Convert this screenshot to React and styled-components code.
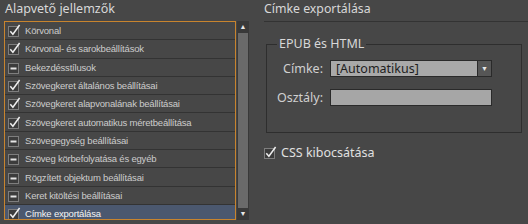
import React from 'react'
import styled, { createGlobalStyle } from 'styled-components'

const GlobalStyle = createGlobalStyle`
  html, body {
    margin: 0;
    padding: 0;
    background: #474747;
  }
  body {
    font-family: "Noto Sans", "Liberation Sans", sans-serif;
    color: #d6d6d6;
  }
`

const items = [
  { label: 'Körvonal', state: 'on' },
  { label: 'Körvonal- és sarokbeállítások', state: 'on' },
  { label: 'Bekezdésstílusok', state: 'mixed' },
  { label: 'Szövegkeret általános beállításai', state: 'on' },
  { label: 'Szövegkeret alapvonalának beállításai', state: 'on' },
  { label: 'Szövegkeret automatikus méretbeállítása', state: 'on' },
  { label: 'Szövegegység beállításai', state: 'mixed' },
  { label: 'Szöveg körbefolyatása és egyéb', state: 'mixed' },
  { label: 'Rögzített objektum beállításai', state: 'mixed' },
  { label: 'Keret kitöltési beállításai', state: 'mixed' },
  { label: 'Címke exportálása', state: 'on', selected: true },
]

const CheckIcon = ({ state }) => (
  <svg width="13" height="13" viewBox="0 0 13 13">
    <rect x="0.5" y="2.5" width="10" height="10" fill="#3c3c3c" stroke="#7e7e7e" />
    {state === 'on' ? (
      <path d="M2.3 7.2 L4.9 10.2 L11.6 1" fill="none" stroke="#eeeeee" strokeWidth="1.5" />
    ) : (
      <rect x="2.5" y="6.5" width="6" height="2" fill="#e4e4e4" />
    )}
  </svg>
)

const App = () => {
  return (
    <>
      <GlobalStyle />
      <Page>
        <LeftPanel>
          <Title>Alapvető jellemzők</Title>
          <ListFrame>
            <List>
              {items.map((it) => (
                <Row key={it.label} selected={it.selected}>
                  <CheckIcon state={it.state} />
                  <RowText>{it.label}</RowText>
                </Row>
              ))}
            </List>
            <Scrollbar>
              <Arrow>▲</Arrow>
              <Thumb />
              <Arrow>▼</Arrow>
            </Scrollbar>
          </ListFrame>
        </LeftPanel>
        <RightPanel>
          <Heading>Címke exportálása</Heading>
          <Group>
            <Legend>EPUB és HTML</Legend>
            <FormGrid>
              <Label>Címke:</Label>
              <Select>
                <SelectValue>[Automatikus]</SelectValue>
                <DropButton>▼</DropButton>
              </Select>
              <Label>Osztály:</Label>
              <TextInput />
            </FormGrid>
          </Group>
          <CheckRow>
            <CheckIcon state="on" />
            <CheckLabel>CSS kibocsátása</CheckLabel>
          </CheckRow>
        </RightPanel>
      </Page>
    </>
  )
}

export default App

const Page = styled.div`
  width: 528px;
  height: 224px;
  display: flex;
  overflow: hidden;
`

const LeftPanel = styled.div`
  width: 264px;
  padding-left: 4px;
  box-sizing: border-box;
  display: flex;
  flex-direction: column;
`

const Title = styled.div`
  height: 21px;
  padding-left: 1px;
  font-size: 12.5px;
  line-height: 18px;
  color: #d8d8d8;
`

const ListFrame = styled.div`
  display: flex;
  gap: 1px;
  height: 199px;
`

const List = styled.div`
  width: 232px;
  box-sizing: border-box;
  border: 1px solid #c8842e;
  overflow: hidden;
  background: #4a4a4a;
`

const Row = styled.div`
  height: 18.3px;
  box-sizing: border-box;
  display: flex;
  align-items: center;
  gap: 4px;
  padding-left: 3px;
  border-bottom: 1px solid #333333;
  background: ${({ selected }) => (selected ? '#4b586f' : '#474747')};
  color: ${({ selected }) => (selected ? '#f4f4f4' : '#cccccc')};
`

const RowText = styled.span`
  font-family: "Liberation Sans", Arial, sans-serif;
  font-size: 9.5px;
  letter-spacing: -0.2px;
  white-space: nowrap;
`

const Scrollbar = styled.div`
  width: 12px;
  background: #393939;
  display: flex;
  flex-direction: column;
  align-items: stretch;
`

const Arrow = styled.div`
  height: 12px;
  font-size: 7px;
  line-height: 12px;
  text-align: center;
  color: #e8e8e8;
`

const Thumb = styled.div`
  flex: 1;
  margin: 0 1px;
  background: #6a6a6a;
`

const RightPanel = styled.div`
  flex: 1;
  display: flex;
  flex-direction: column;
`

const Heading = styled.div`
  height: 21px;
  font-size: 12.3px;
  line-height: 18px;
  color: #d8d8d8;
  border-bottom: 1px solid #333333;
`

const Group = styled.div`
  position: relative;
  margin: 22px 6px 0 2px;
  height: 89px;
  border: 1px solid #2e2e2e;
  padding: 15px 0 0 0;
  box-sizing: border-box;
`

const Legend = styled.span`
  position: absolute;
  top: -9px;
  left: 10px;
  padding: 0 2px;
  background: #474747;
  font-size: 12.5px;
  line-height: 16px;
  color: #d8d8d8;
`

const FormGrid = styled.div`
  display: grid;
  grid-template-columns: 56px 162px;
  column-gap: 7px;
  row-gap: 12px;
  align-items: center;
`

const Label = styled.div`
  text-align: right;
  font-size: 12.5px;
  color: #d0d0d0;
`

const Select = styled.div`
  height: 17px;
  box-sizing: border-box;
  border: 1px solid #2a2a2a;
  background: #a9a9a9;
  display: flex;
`

const SelectValue = styled.div`
  flex: 1;
  padding-left: 5px;
  font-size: 12.5px;
  line-height: 15px;
  color: #1e1e1e;
`

const DropButton = styled.div`
  width: 13px;
  background: #565656;
  border-left: 1px solid #2a2a2a;
  color: #e8e8e8;
  font-size: 7px;
  line-height: 15px;
  text-align: center;
`

const TextInput = styled.div`
  height: 17px;
  box-sizing: border-box;
  border: 1px solid #2a2a2a;
  background: #a6a6a6;
`

const CheckRow = styled.div`
  margin-top: 11px;
  display: flex;
  align-items: center;
  gap: 4px;
`

const CheckLabel = styled.span`
  font-size: 12.5px;
  color: #e0e0e0;
`
